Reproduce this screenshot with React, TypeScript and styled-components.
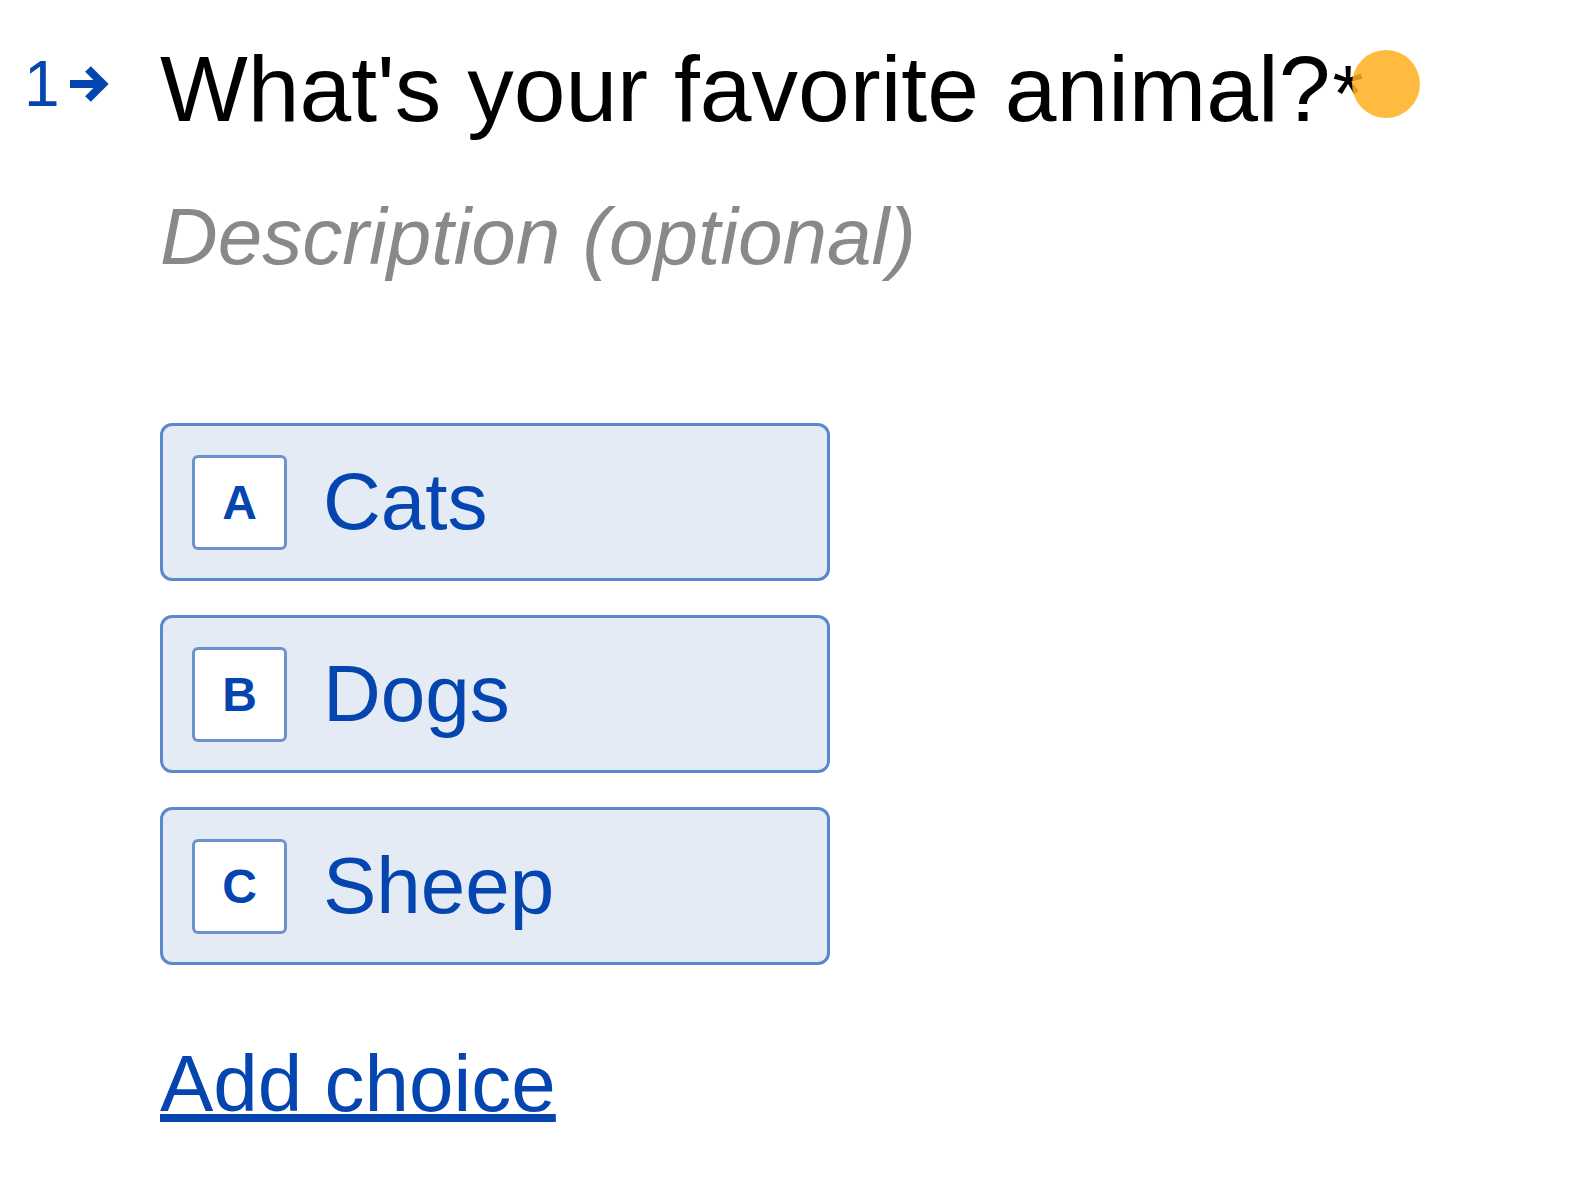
import React from "react";
import styled, { createGlobalStyle } from "styled-components";

const Global = createGlobalStyle`
  html, body { margin: 0; padding: 0; background: #ffffff; }
  body { font-family: "Liberation Sans", Arial, sans-serif; }
`;

const BLUE = "#0445af";

const Page = styled.div`
  display: grid;
  grid-template-columns: 160px 670px;
  padding-top: 34px;
  width: 1572px;
  height: 1192px;
  box-sizing: border-box;
`;

const Counter = styled.div`
  display: flex;
  align-items: center;
  gap: 8px;
  height: 100px;
  padding-left: 24px;
  color: ${BLUE};
  font-size: 64px;
  line-height: 1;
`;

const Content = styled.div`
  display: flex;
  flex-direction: column;
`;

const Question = styled.h1`
  position: relative;
  margin: 0;
  font-weight: 400;
  font-size: 93px;
  line-height: 110px;
  color: #000;
  white-space: nowrap;
  width: max-content;
`;

const Required = styled.span`
  margin-left: 2px;
  font-size: 80px;
`;

const Dot = styled.span`
  position: absolute;
  left: calc(100% - 12px);
  top: 16px;
  width: 68px;
  height: 68px;
  border-radius: 50%;
  background: rgba(255, 176, 32, 0.86);
`;

const Description = styled.p`
  margin: 40px 0 0;
  font-size: 80px;
  line-height: 96px;
  font-style: italic;
  color: #898989;
  white-space: nowrap;
`;

const Choices = styled.div`
  display: flex;
  flex-direction: column;
  gap: 34px;
  margin-top: 138px;
`;

const Choice = styled.div`
  display: flex;
  align-items: center;
  gap: 36px;
  height: 158px;
  box-sizing: border-box;
  padding: 0 29px;
  border: 3px solid #5c88cb;
  border-radius: 12px;
  background: #e5ebf5;
  color: ${BLUE};
  font-size: 80px;
`;

const Key = styled.span`
  display: flex;
  align-items: center;
  justify-content: center;
  width: 95px;
  height: 95px;
  box-sizing: border-box;
  border: 3px solid #6c93d0;
  border-radius: 6px;
  background: #ffffff;
  font-size: 48px;
  font-weight: 700;
`;

const AddChoice = styled.a`
  margin-top: 71px;
  align-self: flex-start;
  color: ${BLUE};
  font-size: 80px;
  line-height: 96px;
  text-decoration: underline;
  text-decoration-thickness: 8px;
  text-underline-offset: 3px;
  cursor: pointer;
`;

const Arrow = () => (
  <svg width="42" height="40" viewBox="0 0 42 40">
    <path d="M2 20 H34" stroke={BLUE} strokeWidth="8" fill="none" />
    <path d="M20 5 L35 20 L20 35" stroke={BLUE} strokeWidth="8" fill="none" strokeLinejoin="miter" />
  </svg>
);

const choices = [
  { key: "A", label: "Cats" },
  { key: "B", label: "Dogs" },
  { key: "C", label: "Sheep" },
];

export default function App() {
  return (
    <>
      <Global />
      <Page>
        <Counter>
          <span>1</span>
          <Arrow />
        </Counter>
        <Content>
          <Question>
            What's your favorite animal?<Required>*</Required>
            <Dot />
          </Question>
          <Description>Description (optional)</Description>
          <Choices>
            {choices.map((c) => (
              <Choice key={c.key}>
                <Key>{c.key}</Key>
                <span>{c.label}</span>
              </Choice>
            ))}
          </Choices>
          <AddChoice>Add choice</AddChoice>
        </Content>
      </Page>
    </>
  );
}
